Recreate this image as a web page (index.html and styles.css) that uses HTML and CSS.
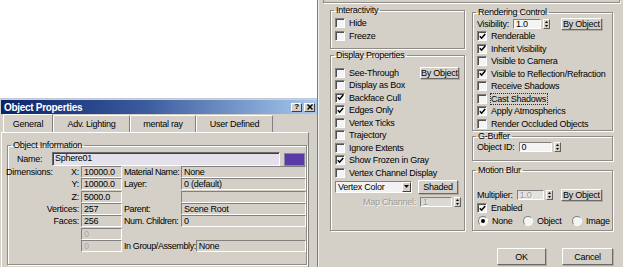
FILE: index.html
```html
<!DOCTYPE html>
<html lang="en">
<head>
    <meta charset="UTF-8">
    <title>Object Properties</title>
    <link rel="stylesheet" href="styles.css">
</head>
<body>
<div class="screen">
    <div class="left">
        <div class="blank"></div>
        <div class="dialog">
            <div class="titlebar">
                <span class="title">Object Properties</span>
                <span class="tbtn">?</span>
                <span class="tbtn">
                    <svg width="6" height="6" viewBox="0 0 6 6"><path d="M0.5 0.5L5.5 5.5M5.5 0.5L0.5 5.5" stroke="#000" stroke-width="1.4"/></svg>
                </span>
            </div>
            <div class="tabs">
                <div class="tab active t1">General</div>
                <div class="tab t2">Adv. Lighting</div>
                <div class="tab t3">mental ray</div>
                <div class="tab t4">User Defined</div>
            </div>
            <div class="page">
                <fieldset class="group info">
                    <legend>Object Information</legend>
                    <div class="name-row">
                        <span class="name-label">Name:</span>
                        <span class="field name">Sphere01</span>
                        <span class="swatch"></span>
                    </div>
                    <div class="dims">
                        <span class="lbl split"><span>Dimensions:</span><span>X:</span></span>
                        <span class="field">10000.0</span>
                        <span class="lbl2">Material Name:</span>
                        <span class="field">None</span>

                        <span class="lbl">Y:</span>
                        <span class="field">10000.0</span>
                        <span class="lbl2">Layer:</span>
                        <span class="field">0 (default)</span>

                        <span class="lbl">Z:</span>
                        <span class="field">5000.0</span>
                        <span class="lbl2"></span>
                        <span class="field"></span>

                        <span class="lbl">Vertices:</span>
                        <span class="field">257</span>
                        <span class="lbl2">Parent:</span>
                        <span class="field">Scene Root</span>

                        <span class="lbl">Faces:</span>
                        <span class="field">256</span>
                        <span class="lbl2">Num. Children:</span>
                        <span class="field">0</span>

                        <span class="lbl"></span>
                        <span class="field dim">0</span>
                        <span class="wide"></span>

                        <span class="lbl"></span>
                        <span class="field dim">0</span>
                        <span class="wide">
                            <span class="lbl2">In Group/Assembly:</span>
                            <span class="field grow">None</span>
                        </span>
                    </div>
                </fieldset>
            </div>
        </div>
    </div>

    <div class="right">
        <div class="stub"></div>
        <div class="cols">
            <div class="col col-a">
                <fieldset class="group g-inter">
                    <legend>Interactivity</legend>
                    <div class="item"><span class="cb"></span>Hide</div>
                    <div class="item"><span class="cb"></span>Freeze</div>
                </fieldset>

                <fieldset class="group g-display">
                    <legend>Display Properties</legend>
                    <div class="item"><span class="cb"></span><span class="grow">See-Through</span><span class="btn by-a">By Object</span></div>
                    <div class="item"><span class="cb"></span>Display as Box</div>
                    <div class="item"><span class="cb"><svg width="7" height="7" viewBox="0 0 7 7"><path d="M0.8 3.2L2.6 5.2L6.2 1" stroke="#000" stroke-width="1.5" fill="none"/></svg></span>Backface Cull</div>
                    <div class="item"><span class="cb"><svg width="7" height="7" viewBox="0 0 7 7"><path d="M0.8 3.2L2.6 5.2L6.2 1" stroke="#000" stroke-width="1.5" fill="none"/></svg></span>Edges Only</div>
                    <div class="item"><span class="cb"></span>Vertex Ticks</div>
                    <div class="item"><span class="cb"></span>Trajectory</div>
                    <div class="item"><span class="cb"></span>Ignore Extents</div>
                    <div class="item"><span class="cb"><svg width="7" height="7" viewBox="0 0 7 7"><path d="M0.8 3.2L2.6 5.2L6.2 1" stroke="#000" stroke-width="1.5" fill="none"/></svg></span>Show Frozen in Gray</div>
                    <div class="item"><span class="cb"></span>Vertex Channel Display</div>
                    <div class="dd-row">
                        <span class="dropdown"><span class="grow">Vertex Color</span><span class="dd-arrow"><svg width="5" height="3" viewBox="0 0 5 3"><path d="M0 0H5L2.5 3Z" fill="#000"/></svg></span></span>
                        <span class="btn shaded">Shaded</span>
                    </div>
                    <div class="map-row">
                        <span class="disabled">Map Channel:</span>
                        <span class="field spin-box map-box disabled">1</span>
                        <span class="arrows"><span><svg width="3" height="2" viewBox="0 0 3 2"><path d="M0 2H3L1.5 0Z" fill="#000"/></svg></span><span><svg width="3" height="2" viewBox="0 0 3 2"><path d="M0 0H3L1.5 2Z" fill="#000"/></svg></span></span>
                    </div>
                </fieldset>
            </div>

            <div class="col col-b">
                <fieldset class="group g-render">
                    <legend>Rendering Control</legend>
                    <div class="vis-row">
                        <span>Visibility:</span>
                        <span class="field spin-box vis-box">1.0</span>
                        <span class="arrows"><span><svg width="3" height="2" viewBox="0 0 3 2"><path d="M0 2H3L1.5 0Z" fill="#000"/></svg></span><span><svg width="3" height="2" viewBox="0 0 3 2"><path d="M0 0H3L1.5 2Z" fill="#000"/></svg></span></span>
                        <span class="grow"></span>
                        <span class="btn by-b">By Object</span>
                    </div>
                    <div class="item"><span class="cb"><svg width="7" height="7" viewBox="0 0 7 7"><path d="M0.8 3.2L2.6 5.2L6.2 1" stroke="#000" stroke-width="1.5" fill="none"/></svg></span>Renderable</div>
                    <div class="item"><span class="cb"><svg width="7" height="7" viewBox="0 0 7 7"><path d="M0.8 3.2L2.6 5.2L6.2 1" stroke="#000" stroke-width="1.5" fill="none"/></svg></span>Inherit Visibility</div>
                    <div class="item"><span class="cb"></span>Visible to Camera</div>
                    <div class="item"><span class="cb"><svg width="7" height="7" viewBox="0 0 7 7"><path d="M0.8 3.2L2.6 5.2L6.2 1" stroke="#000" stroke-width="1.5" fill="none"/></svg></span>Visible to Reflection/Refraction</div>
                    <div class="item"><span class="cb"></span>Receive Shadows</div>
                    <div class="item"><span class="cb"></span><span class="focus">Cast Shadows</span></div>
                    <div class="item"><span class="cb"><svg width="7" height="7" viewBox="0 0 7 7"><path d="M0.8 3.2L2.6 5.2L6.2 1" stroke="#000" stroke-width="1.5" fill="none"/></svg></span>Apply Atmospherics</div>
                    <div class="item"><span class="cb"></span>Render Occluded Objects</div>
                </fieldset>

                <fieldset class="group g-buffer">
                    <legend>G-Buffer</legend>
                    <div class="id-row">
                        <span>Object ID:</span>
                        <span class="field spin-box id-box">0</span>
                        <span class="arrows"><span><svg width="3" height="2" viewBox="0 0 3 2"><path d="M0 2H3L1.5 0Z" fill="#000"/></svg></span><span><svg width="3" height="2" viewBox="0 0 3 2"><path d="M0 0H3L1.5 2Z" fill="#000"/></svg></span></span>
                    </div>
                </fieldset>

                <fieldset class="group g-blur">
                    <legend>Motion Blur</legend>
                    <div class="mult-row">
                        <span>Multiplier:</span>
                        <span class="field spin-box mult-box disabled">1.0</span>
                        <span class="arrows"><span><svg width="3" height="2" viewBox="0 0 3 2"><path d="M0 2H3L1.5 0Z" fill="#000"/></svg></span><span><svg width="3" height="2" viewBox="0 0 3 2"><path d="M0 0H3L1.5 2Z" fill="#000"/></svg></span></span>
                        <span class="grow"></span>
                        <span class="btn by-b">By Object</span>
                    </div>
                    <div class="item"><span class="cb"><svg width="7" height="7" viewBox="0 0 7 7"><path d="M0.8 3.2L2.6 5.2L6.2 1" stroke="#000" stroke-width="1.5" fill="none"/></svg></span>Enabled</div>
                    <div class="radio-row">
                        <span class="opt r-none"><span class="rb on"></span>None</span>
                        <span class="opt r-obj"><span class="rb"></span>Object</span>
                        <span class="opt"><span class="rb"></span>Image</span>
                    </div>
                </fieldset>

                <div class="buttons">
                    <span class="btn push ok">OK</span>
                    <span class="btn push cancel">Cancel</span>
                </div>
            </div>
        </div>
    </div>
</div>
</body>
</html>
```

FILE: styles.css
```css
* {
    box-sizing: border-box;
}

body {
    margin: 0;
    width: 623px;
    height: 267px;
    overflow: hidden;
    background: #fff;
    color: #000;
    font-family: "Liberation Sans", Arial, sans-serif;
    font-size: 9px;
    letter-spacing: -0.25px;
}

.screen {
    display: flex;
    height: 267px;
}

.grow {
    flex: 1;
}

/* left dialog */

.left {
    width: 317px;
    display: flex;
    flex-direction: column;
}

.blank {
    height: 98px;
    background: #fff;
}

.dialog {
    flex: 1;
    background: #d4d0c8;
    border-top: 1px solid #c4c8d4;
    padding: 1px 0 0 1px;
    overflow: hidden;
}

.titlebar {
    height: 14px;
    display: flex;
    align-items: center;
    padding: 0 2px 0 3px;
    background: linear-gradient(to right, #0a246a, #3a5b9c 45%, #a6caf0);
}

.title {
    flex: 1;
    color: #fff;
    font-weight: bold;
    font-size: 10px;
    letter-spacing: -0.3px;
}

.tbtn {
    width: 11px;
    height: 9px;
    margin-left: 2px;
    display: flex;
    align-items: center;
    justify-content: center;
    background: #d4d0c8;
    border: 1px solid;
    border-color: #fff #404040 #404040 #fff;
    font-size: 8px;
    font-weight: bold;
    line-height: 1;
}

.tabs {
    height: 18px;
    display: flex;
    align-items: flex-end;
    padding-left: 2px;
}

.tab {
    height: 17px;
    display: flex;
    align-items: center;
    justify-content: center;
    border-top: 1px solid #fff;
    border-left: 1px solid #fff;
    border-right: 1px solid #808080;
    border-radius: 2px 2px 0 0;
}

.tab.active {
    height: 18px;
}

.t1 { width: 50px; }
.t2 { width: 77px; }
.t3 { width: 66px; }
.t4 { width: 77px; }

.page {
    height: 200px;
    width: 308px;
    border-top: 1px solid #fff;
    border-left: 1px solid #fff;
    border-right: 1px solid #808080;
    padding: 7px 0 0 5px;
}

/* group boxes */

.group {
    margin: 0;
    padding: 0;
    min-width: 0;
    border: 1px solid #8e8c88;
    box-shadow: inset 1px 1px 0 #fff, 1px 1px 0 #fff;
}

.group legend {
    height: 10px;
    line-height: 10px;
    padding: 0 2px;
    margin-left: 3px;
}

.info {
    width: 300px;
    height: 125px;
}

.name-row {
    height: 14px;
    margin-top: 2px;
    display: flex;
    align-items: center;
}

.name-label {
    width: 44px;
    padding-left: 9px;
}

.field {
    height: 12px;
    line-height: 10px;
    padding-left: 2px;
    white-space: nowrap;
    overflow: hidden;
    background: #d4d0c8;
    border: 1px solid;
    border-color: #808080 #fff #fff #808080;
}

.field.name {
    width: 228px;
    height: 14px;
    line-height: 11px;
    background: #e4e1ea;
    border-color: #6a6a6a #fff #fff #6a6a6a;
    box-shadow: inset 1px 1px 0 #404040;
}

.swatch {
    width: 21px;
    height: 13px;
    margin-left: 4px;
    background: #5a3aa6;
    border: 1px solid #8a86a0;
}

.dims {
    margin: 0 0 0 -2px;
    display: grid;
    grid-template-columns: 75px 41px 59px 125px;
    grid-auto-rows: 12.3px;
    align-items: center;
}

.lbl {
    text-align: right;
    padding-right: 2px;
}

.lbl.split {
    display: flex;
    justify-content: space-between;
    text-align: left;
}

.lbl2 {
    padding-left: 2px;
    white-space: nowrap;
    letter-spacing: -0.4px;
}

.dims .field:empty {
    background: #d4d0c8;
}

.field.dim {
    color: #a8a8a8;
}

.wide {
    grid-column: 3 / 5;
    display: flex;
    align-items: center;
}

/* right dialog */

.right {
    flex: 1;
    background: #d4d0c8;
    border-left: 1px solid #7c7c7c;
    box-shadow: inset 1px 0 0 #f0f0f0;
    padding-left: 12px;
}

.stub {
    height: 3px;
    width: 297px;
    margin-left: -7px;
    border: 1px solid #8e8c88;
    border-top: none;
    box-shadow: 1px 1px 0 #fff;
}

.cols {
    display: flex;
    gap: 7px;
}

.col {
    display: flex;
    flex-direction: column;
}

.col-a {
    width: 135px;
}

.col-b {
    width: 141px;
}

.item {
    height: 12.5px;
    display: flex;
    align-items: center;
    padding-left: 4px;
    white-space: nowrap;
}

.cb {
    width: 10px;
    height: 10px;
    margin-right: 4px;
    flex: none;
    display: flex;
    align-items: center;
    justify-content: center;
    background: #f4f4f4;
    border: 1px solid;
    border-color: #808080 #fff #fff #808080;
    box-shadow: inset 1px 1px 0 #505050;
}

.btn {
    display: flex;
    align-items: center;
    justify-content: center;
    background: #d4d0c8;
    border: 1px solid;
    border-color: #fff #6a6a6a #6a6a6a #fff;
    box-shadow: 1px 1px 0 #b0aca4;
    white-space: nowrap;
}

.by-a {
    width: 39px;
    height: 12px;
    margin-right: 5px;
}

.by-b {
    width: 41px;
    height: 12px;
    margin-right: 10px;
}

.g-inter {
    margin-top: 2px;
    height: 44px;
    padding-top: 2px;
}

.g-display {
    margin-top: 1px;
    height: 181px;
    padding-top: 6.5px;
}

.dd-row {
    height: 14px;
    margin-top: 0.5px;
    display: flex;
    align-items: center;
    padding-left: 4px;
}

.dropdown {
    width: 77px;
    height: 12px;
    display: flex;
    align-items: center;
    padding-left: 2px;
    background: #f2f1f4;
    border: 1px solid;
    border-color: #808080 #fff #fff #808080;
}

.dd-arrow {
    width: 9px;
    height: 10px;
    display: flex;
    align-items: center;
    justify-content: center;
    background: #d4d0c8;
    border: 1px solid;
    border-color: #fff #404040 #404040 #fff;
}

.shaded {
    width: 40px;
    height: 14px;
    margin-left: 6px;
}

.map-row {
    height: 12px;
    margin-top: 2px;
    display: flex;
    align-items: center;
    justify-content: flex-end;
    padding-right: 3px;
}

.disabled {
    color: #9a9a9a;
    text-shadow: 1px 1px 0 #f4f4f4;
}

.map-row > .disabled:first-child {
    margin-right: 4px;
}

.spin-box {
    height: 10px;
    line-height: 8px;
    background: #f4f4f4;
}

.map-box {
    width: 32px;
    background: #dcd9d2;
}

.arrows {
    width: 7px;
    height: 10px;
    margin-left: 2px;
    display: flex;
    flex-direction: column;
    border: 1px solid;
    border-color: #fff #606060 #606060 #fff;
}

.arrows span {
    flex: 1;
    display: flex;
    align-items: center;
    justify-content: center;
}

.g-render {
    margin-top: 4px;
    height: 124px;
    padding-top: 1px;
}

.vis-row,
.id-row,
.mult-row {
    display: flex;
    align-items: center;
    padding-left: 4px;
}

.vis-row {
    height: 12px;
}

.vis-box {
    width: 28px;
    margin-left: 4px;
}

.focus {
    outline: 1px dotted #303030;
    outline-offset: 0;
    padding-right: 1px;
}

.g-buffer {
    margin-top: 0;
    height: 30px;
}

.id-row {
    height: 12px;
}

.id-box {
    width: 33px;
    margin-left: 4px;
}

.g-blur {
    margin-top: 4px;
    height: 66px;
    padding-top: 13px;
}

.mult-row {
    height: 14px;
}

.mult-box {
    width: 27px;
    margin-left: 4px;
    background: #e4e2de;
}

.radio-row {
    height: 12px;
    display: flex;
    align-items: center;
    padding-left: 5px;
}

.opt {
    display: flex;
    align-items: center;
}

.r-none {
    width: 45px;
}

.r-obj {
    width: 49px;
}

.rb {
    width: 10px;
    height: 10px;
    margin-right: 4px;
    border-radius: 50%;
    display: flex;
    align-items: center;
    justify-content: center;
    background: #f4f4f4;
    border: 1px solid;
    border-color: #808080 #fff #fff #808080;
}

.rb.on::after {
    content: "";
    width: 4px;
    height: 4px;
    border-radius: 50%;
    background: #000;
}

.buttons {
    margin-top: 17px;
    display: flex;
    gap: 16px;
    padding-left: 25px;
}

.push {
    height: 17px;
}

.ok {
    width: 52px;
}

.cancel {
    width: 54px;
}
```
